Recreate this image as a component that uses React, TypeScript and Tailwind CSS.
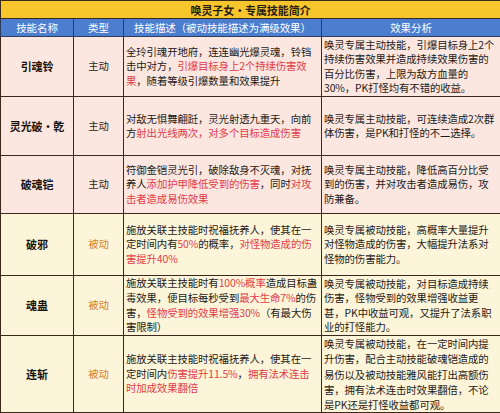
type Seg = string | { r: string };

type Row = {
  name: string;
  type: string;
  passive: boolean;
  h: string;
  descLead?: string;
  effectLead?: string;
  desc: Seg[][];
  effect: string[];
};

const ROWS: Row[] = [
  {
    name: "引魂铃",
    type: "主动",
    passive: false,
    h: "h-[60px]",
    desc: [
      ["全玲引魂开地府，连连幽光爆灵魂，铃铛"],
      ["击中对方，", { r: "引爆目标身上2个持续伤害效" }],
      [{ r: "果" }, "，随着等级引爆数量和效果提升"],
    ],
    effect: [
      "唤灵专属主动技能，引爆目标身上2个",
      "持续伤害效果并造成持续效果伤害的",
      "百分比伤害，上限为敌方血量的",
      "30%，PK打怪均有不错的收益。",
    ],
  },
  {
    name: "灵光破·乾",
    type: "主动",
    passive: false,
    h: "h-[59px]",
    desc: [
      ["对敌无惧舞翩跹，灵光射透九重天，向前"],
      ["方", { r: "射出光线两次，对多个目标造成伤害" }],
    ],
    effect: ["唤灵专属主动技能，可连续造成2次群", "体伤害，是PK和打怪的不二选择。"],
  },
  {
    name: "破魂铠",
    type: "主动",
    passive: false,
    h: "h-[58px]",
    desc: [
      ["符御金铠灵光引，破除敌身不灭魂，对抚"],
      ["养人", { r: "添加护甲降低受到的伤害" }, "，同时", { r: "对攻" }],
      [{ r: "击者造成易伤效果" }],
    ],
    effect: [
      "唤灵专属主动技能，降低高百分比受",
      "到的伤害，并对攻击者造成易伤，攻",
      "防兼备。",
    ],
  },
  {
    name: "破邪",
    type: "被动",
    passive: true,
    h: "h-[62px]",
    desc: [
      ["施放关联主技能时祝福抚养人，使其在一"],
      ["定时间内有", { r: "50%" }, "的概率，", { r: "对怪物造成的伤" }],
      [{ r: "害提升40%" }],
    ],
    effect: [
      "唤灵专属被动技能，高概率大量提升",
      "对怪物造成的伤害，大幅提升法系对",
      "怪物的伤害能力。",
    ],
  },
  {
    name: "魂蛊",
    type: "被动",
    passive: true,
    h: "h-[59px]",
    descLead: "leading-[14.8px]",
    desc: [
      ["施放关联主技能时有", { r: "100%概率" }, "造成目标蛊"],
      ["毒效果，便目标每秒受到", { r: "最大生命7%" }, "的伤"],
      ["害，", { r: "怪物受到的效果增强30%" }, "（有最大伤"],
      ["害限制）"],
    ],
    effect: [
      "唤灵专属被动技能，对目标造成持续",
      "伤害，怪物受到的效果增强收益更",
      "甚，PK中收益可观，又提升了法系职",
      "业的打怪能力。",
    ],
  },
  {
    name: "连斩",
    type: "被动",
    passive: true,
    h: "h-[77px]",
    effectLead: "leading-[15.2px]",
    desc: [
      ["施放关联主技能时祝福抚养人，使其在一"],
      ["定时间内", { r: "伤害提升11.5%" }, "，", { r: "拥有法术连击" }],
      [{ r: "时加成效果翻倍" }],
    ],
    effect: [
      "唤灵专属被动技能，在一定时间内提",
      "升伤害，配合主动技能破魂铠造成的",
      "易伤以及被动技能雅风能打出高额伤",
      "害，拥有法术连击时效果翻倍，不论",
      "是PK还是打怪收益都可观。",
    ],
  },
];

export default function App() {
  return (
    <div
      className="w-[500px] h-[413px] overflow-hidden bg-white text-[#1e1a17]"
      style={{ fontFamily: '"Noto Sans CJK SC", "Noto Sans", sans-serif' }}
    >
      <table className="w-[500px] border-collapse table-fixed text-[10.4px] leading-[14.5px] tracking-[-0.1px]">
        <colgroup>
          <col className="w-[73px]" />
          <col className="w-[50px]" />
          <col className="w-[198px]" />
          <col className="w-[179px]" />
        </colgroup>
        <thead>
          <tr className="h-[18px] bg-[#f7c52c]">
            <th
              colSpan={4}
              className="border border-[#3b2a1c] text-[11px] font-bold text-[#2a1d10] text-center leading-[16px]"
            >
              唤灵子女·专属技能简介
            </th>
          </tr>
          <tr className="h-[18px] bg-[#4c7ecf]">
            {["技能名称", "类型", "技能描述（被动技能描述为满级效果）", "效果分析"].map((h) => (
              <th
                key={h}
                className="border border-[#2c3e5c] text-[10.5px] font-normal text-white text-center leading-[16px]"
              >
                {h}
              </th>
            ))}
          </tr>
        </thead>
        <tbody>
          {ROWS.map((row) => (
            <tr
              key={row.name}
              className={`${row.h} ${row.passive ? "bg-[#fdf5d9]" : "bg-[#fbe7df]"}`}
            >
              <td className="border border-[#3b2a1c] text-center font-bold text-[11px] text-[#1a1410]">
                {row.name}
              </td>
              <td
                className={`border border-[#3b2a1c] text-center ${
                  row.passive ? "text-[#d2802e]" : "text-[#2a2420]"
                }`}
              >
                {row.type}
              </td>
              <td
                className={`border border-[#3b2a1c] px-[2px] align-middle whitespace-nowrap ${
                  row.descLead ?? ""
                }`}
              >
                {row.desc.map((line, i) => (
                  <div key={i}>
                    {line.map((seg, j) =>
                      typeof seg === "string" ? (
                        <span key={j}>{seg}</span>
                      ) : (
                        <span key={j} className="text-[#e23b4a]">
                          {seg.r}
                        </span>
                      )
                    )}
                  </div>
                ))}
              </td>
              <td
                className={`border border-[#3b2a1c] px-[2px] align-middle whitespace-nowrap ${
                  row.effectLead ?? ""
                }`}
              >
                {row.effect.map((line, i) => (
                  <div key={i}>{line}</div>
                ))}
              </td>
            </tr>
          ))}
        </tbody>
      </table>
    </div>
  );
}
